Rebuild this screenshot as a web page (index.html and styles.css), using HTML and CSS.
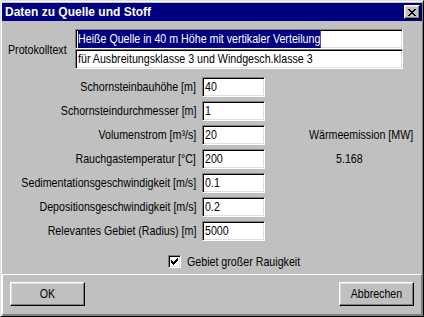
FILE: index.html
```html
<!DOCTYPE html>
<html>
<head>
    <title>Daten zu Quelle und Stoff</title>
    <link rel="stylesheet" href="styles.css">
</head>
<body>
    <div class="window">
        <div class="titlebar">
            <span class="title">Daten zu Quelle und Stoff</span>
            <div class="close">
                <svg width="8" height="7" viewBox="0 0 8 7">
                    <path d="M0 0h2v1H0zM6 0h2v1H6zM1 1h2v1H1zM5 1h2v1H5zM2 2h4v1H2zM3 3h2v1H3zM2 4h4v1H2zM1 5h2v1H1zM5 5h2v1H5zM0 6h2v1H0zM6 6h2v1H6z" fill="#000"/>
                </svg>
            </div>
        </div>

        <div class="content">
            <div class="protokoll">
                <div class="protokoll-label"><span class="nt">Protokolltext</span></div>
                <div class="protokoll-lines">
                    <div class="field"><span class="nt selected">Heiße Quelle in 40 m Höhe mit vertikaler Verteilung</span></div>
                    <div class="field"><span class="nt">für Ausbreitungsklasse 3 und Windgesch.klasse 3</span></div>
                </div>
            </div>

            <div class="params">
                <div class="label"><span class="nt">Schornsteinbauhöhe [m]</span></div>
                <div class="field"><span class="nt">40</span></div>
                <div class="side"></div>

                <div class="label"><span class="nt">Schornsteindurchmesser [m]</span></div>
                <div class="field"><span class="nt">1</span></div>
                <div class="side"></div>

                <div class="label"><span class="nt">Volumenstrom [m³/s]</span></div>
                <div class="field"><span class="nt">20</span></div>
                <div class="side heat-label"><span class="nt">Wärmeemission [MW]</span></div>

                <div class="label"><span class="nt">Rauchgastemperatur [°C]</span></div>
                <div class="field"><span class="nt">200</span></div>
                <div class="side heat-value"><span class="nt">5.168</span></div>

                <div class="label"><span class="nt">Sedimentationsgeschwindigkeit [m/s]</span></div>
                <div class="field"><span class="nt">0.1</span></div>
                <div class="side"></div>

                <div class="label"><span class="nt">Depositionsgeschwindigkeit [m/s]</span></div>
                <div class="field"><span class="nt">0.2</span></div>
                <div class="side"></div>

                <div class="label"><span class="nt">Relevantes Gebiet (Radius) [m]</span></div>
                <div class="field"><span class="nt">5000</span></div>
                <div class="side"></div>
            </div>

            <div class="check-row">
                <div class="checkbox">
                    <svg width="7" height="7" viewBox="0 0 7 7">
                        <path d="M6 0h1v1H6zM5 1h2v1H5zM0 2h1v1H0zM4 2h3v1H4zM0 3h2v1H0zM3 3h3v1H3zM0 4h5v1H0zM1 5h3v1H1zM2 6h1v1H2z" fill="#000"/>
                    </svg>
                </div>
                <span class="nt">Gebiet großer Rauigkeit</span>
            </div>
        </div>

        <div class="buttons">
            <div class="button"><span class="nt">OK</span></div>
            <div class="button"><span class="nt">Abbrechen</span></div>
        </div>
    </div>
</body>
</html>
```

FILE: styles.css
```css
body {
    margin: 0;
    background: #c0c0c0;
    font-family: "Liberation Sans", Arial, sans-serif;
    font-size: 13px;
    color: #000;
}
/* narrow dialog font: Arial squeezed to Arial Narrow widths */
.nt {
    display: inline-block;
    flex-shrink: 0;
    transform: scaleX(0.82);
    transform-origin: left center;
    white-space: nowrap;
}
.window {
    width: 424px;
    height: 317px;
    box-sizing: border-box;
    padding: 1px;
    background: #c0c0c0;
    border: 1px solid;
    border-color: #dfdfdf #000 #000 #dfdfdf;
    box-shadow: inset 1px 1px #fff, inset -1px -1px #808080;
    display: flex;
    flex-direction: column;
}
.titlebar {
    height: 18px;
    margin: 1px 0 0;
    background: #000080;
    display: flex;
    align-items: center;
    justify-content: space-between;
    padding: 0 2px 0 3px;
}
.title {
    color: #fff;
    font-weight: bold;
    font-size: 12px;
}
.close {
    width: 14px;
    height: 12px;
    background: #c0c0c0;
    border: 1px solid;
    border-color: #fff #000 #000 #fff;
    box-shadow: inset -1px -1px #808080, inset 1px 1px #dfdfdf;
    display: flex;
    align-items: center;
    justify-content: center;
}
.close svg { display: block; }

.content {
    flex: 1;
    padding: 8px 0 0 0;
}
.field {
    box-sizing: border-box;
    height: 20px;
    background: #fff;
    border: 1px solid;
    border-color: #808080 #fff #fff #808080;
    box-shadow: inset 1px 1px #000, inset -1px -1px #dfdfdf;
    padding: 0 2px;
    line-height: 18px;
    white-space: nowrap;
    overflow: hidden;
}
.selected {
    background: #000080;
    color: #fff;
}

.protokoll {
    display: flex;
    align-items: center;
    padding-left: 6px;
}
.protokoll-label { width: 67px; }
.protokoll-lines {
    width: 328px;
    display: flex;
    flex-direction: column;
}

.params {
    margin-top: 8px;
    display: grid;
    grid-template-columns: 194px 63px 1fr;
    column-gap: 6px;
    grid-auto-rows: 24px;
}
.label {
    display: flex;
    justify-content: flex-end;
    height: 20px;
    line-height: 20px;
}
.label .nt { transform-origin: right center; }
.side {
    line-height: 20px;
    white-space: nowrap;
}
.heat-label { padding-left: 38px; }
.heat-value { padding-left: 65px; }

.check-row {
    margin-top: 10px;
    padding-left: 166px;
    display: flex;
    align-items: center;
    gap: 6px;
    height: 13px;
}
.checkbox {
    width: 13px;
    height: 13px;
    box-sizing: border-box;
    background: #fff;
    border: 1px solid;
    border-color: #808080 #fff #fff #808080;
    box-shadow: inset 1px 1px #000, inset -1px -1px #dfdfdf;
    display: flex;
    align-items: center;
    justify-content: center;
}
.checkbox svg { display: block; }

.buttons {
    height: 41px;
    box-sizing: border-box;
    border: 1px solid;
    border-color: #fff #808080 #808080 #fff;
    display: flex;
    justify-content: space-between;
    align-items: flex-start;
    padding: 7px 7px 0;
}
.button {
    width: 75px;
    height: 24px;
    box-sizing: border-box;
    border: 1px solid;
    border-color: #fff #000 #000 #fff;
    box-shadow: inset -1px -1px #808080, inset 1px 1px #dfdfdf;
    text-align: center;
    line-height: 22px;
}
.button .nt { transform-origin: center; }
```
